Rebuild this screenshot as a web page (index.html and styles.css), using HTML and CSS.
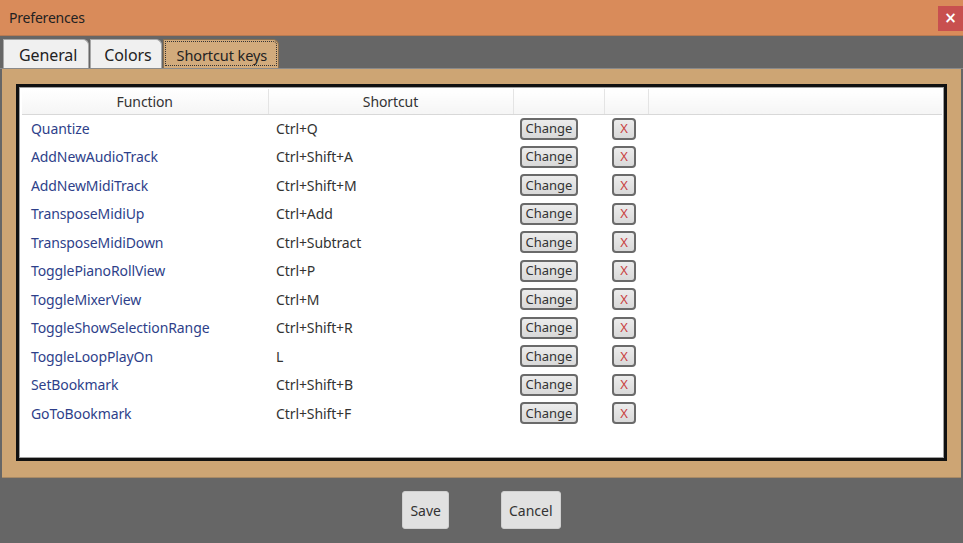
FILE: index.html
```html
<!DOCTYPE html>
<html lang="en">
<head>
  <meta charset="UTF-8">
  <title>Preferences</title>
  <link rel="stylesheet" href="styles.css">
</head>
<body>
  <div class="titlebar">
    <span class="title">Preferences</span>
    <button class="close-btn">&#215;</button>
  </div>

  <div class="tabs">
    <div class="tab tab-general">General</div>
    <div class="tab tab-colors">Colors</div>
    <div class="tab tab-active">Shortcut keys</div>
  </div>

  <div class="panel">
    <div class="grid-box">
      <div class="grid-inner">
        <table class="shortcuts">
          <thead>
            <tr>
              <th class="col-func">Function</th>
              <th class="col-key">Shortcut</th>
              <th class="col-change"></th>
              <th class="col-del"></th>
              <th class="col-rest"></th>
            </tr>
          </thead>
          <tbody id="rows"></tbody>
        </table>
      </div>
    </div>
  </div>

  <div class="footer">
    <button class="dlg-btn">Save</button>
    <button class="dlg-btn">Cancel</button>
  </div>

  <script>
    const shortcuts = [
      ['Quantize', 'Ctrl+Q'],
      ['AddNewAudioTrack', 'Ctrl+Shift+A'],
      ['AddNewMidiTrack', 'Ctrl+Shift+M'],
      ['TransposeMidiUp', 'Ctrl+Add'],
      ['TransposeMidiDown', 'Ctrl+Subtract'],
      ['TogglePianoRollView', 'Ctrl+P'],
      ['ToggleMixerView', 'Ctrl+M'],
      ['ToggleShowSelectionRange', 'Ctrl+Shift+R'],
      ['ToggleLoopPlayOn', 'L'],
      ['SetBookmark', 'Ctrl+Shift+B'],
      ['GoToBookmark', 'Ctrl+Shift+F']
    ];

    const tbody = document.getElementById('rows');
    shortcuts.forEach(([fn, key]) => {
      const tr = document.createElement('tr');
      tr.innerHTML =
        `<td class="fn">${fn}</td>` +
        `<td class="key">${key}</td>` +
        `<td><button class="change-btn">Change</button></td>` +
        `<td><button class="del-btn">X</button></td>` +
        `<td></td>`;
      tbody.appendChild(tr);
    });
  </script>
</body>
</html>
```

FILE: styles.css
```css
* {
  margin: 0;
  padding: 0;
  box-sizing: border-box;
}

body {
  font-family: 'Noto Sans', 'Open Sans', sans-serif;
  background: #666666;
  color: #222;
  width: 963px;
  height: 543px;
  overflow: hidden;
}

.titlebar {
  height: 36px;
  background: #d98b5a;
  display: flex;
  align-items: center;
  justify-content: space-between;
  padding-left: 9px;
  border-bottom: 1px solid #b87a52;
}

.title {
  font-size: 14px;
  letter-spacing: -0.2px;
  color: #222;
}

.close-btn {
  width: 25px;
  height: 25px;
  margin-top: 2px;
  background: #c8504f;
  border: none;
  color: #fff;
  font-size: 15px;
  font-weight: 700;
  line-height: 1;
  font-family: 'DejaVu Sans', sans-serif;
}

.tabs {
  height: 33px;
  display: flex;
  align-items: flex-end;
  padding-left: 3px;
  gap: 1px;
  border-bottom: 1px solid #8a8a8a;
}

.tab {
  height: 29px;
  background: #f0f0f0;
  border: 1px solid #a8a8a8;
  border-bottom: none;
  border-top-right-radius: 6px;
  font-size: 16px;
  letter-spacing: -0.1px;
  color: #222;
  padding: 1px 11px 0 15px;
  display: flex;
  align-items: center;
}

.tab-colors {
  padding: 1px 9px 0 13px;
}

.tab-active {
  background: #d2ab7c;
  font-size: 14.5px;
  padding: 2px 11px 0 13px;
  border: 1px solid #8a7050;
  outline: 1px dotted #333;
  outline-offset: -3px;
  border-bottom: none;
}

.panel {
  height: 409px;
  background: #cda574;
  margin: 0 2px;
  padding: 15px 14px;
  border-bottom: 1px solid #a88a66;
}

.grid-box {
  height: 377px;
  border: 3px solid #111;
  background: #fff;
}

.grid-inner {
  height: 100%;
  border: 1px solid #a0a0a0;
  padding: 1px 2px 0 2px;
}

.shortcuts {
  width: 920px;
  border-collapse: collapse;
  table-layout: fixed;
}

.shortcuts th {
  height: 25px;
  font-weight: 400;
  font-size: 14px;
  letter-spacing: -0.1px;
  color: #333;
  background: linear-gradient(#ffffff, #f5f5f5);
  border-right: 1px solid #e4e4e4;
  border-bottom: 1px solid #d8d8d8;
  text-align: center;
}

.shortcuts th.col-rest {
  border-right: none;
}

.col-func { width: 246px; }
.col-key { width: 245px; }
.col-change { width: 91px; }
.col-del { width: 44px; }

.shortcuts td {
  height: 28.5px;
  font-size: 14px;
  letter-spacing: -0.1px;
  vertical-align: middle;
}

.shortcuts td.fn {
  color: #2e3f8a;
  padding-left: 9px;
}

.shortcuts td.key {
  color: #333;
  padding-left: 8px;
}

.change-btn,
.del-btn {
  height: 22px;
  margin-left: 7px;
  border: 2px solid #6a6a6a;
  border-radius: 4px;
  background: linear-gradient(#ececec, #d9d9d9);
  font-family: 'Noto Sans', sans-serif;
  font-size: 13px;
  color: #333;
  line-height: 1;
}

.change-btn {
  width: 58px;
}

.del-btn {
  width: 24px;
  margin-left: 8px;
  color: #c94040;
}

.footer {
  display: flex;
  justify-content: center;
  gap: 52px;
  padding-top: 13px;
}

.dlg-btn {
  height: 38px;
  background: #e1e1e1;
  border: 1px solid #d0d0d0;
  border-radius: 3px;
  font-family: 'Noto Sans', sans-serif;
  font-size: 14px;
  color: #333;
  padding: 0 7px;
}
```
